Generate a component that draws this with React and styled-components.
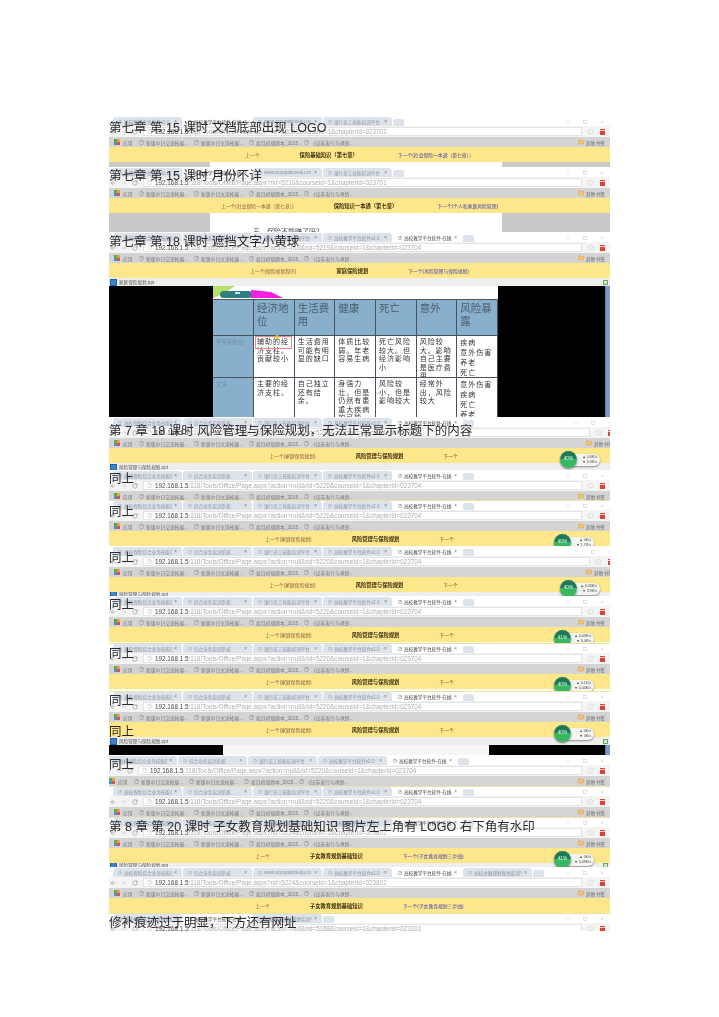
import React from "react";
import styled, { createGlobalStyle } from "styled-components";
import { ArrowLeft, ArrowRight, RotateCw, Star, File, Folder, Minus, Square, X } from "lucide-react";

const Global = createGlobalStyle`
  html, body { margin: 0; padding: 0; background: #fff; }
  body { font-family: "Liberation Sans", "Noto Sans CJK SC", sans-serif; }
`;

const Page = styled.main`
  width: 501px;
  padding: 116px 109px 86px;
  display: flex;
  flex-direction: column;
`;

const Shot = styled.section`
  position: relative;
  height: ${(p) => p.$h}px;
`;

const Frame = styled.div`
  height: 100%;
  overflow: hidden;
  filter: blur(0.55px);
  background: #fff;
`;

const Inner = styled.div`
  width: ${(p) => p.$w}px;
  margin-left: ${(p) => p.$ml}px;
  display: flex;
  flex-direction: column;
`;

const Caption = styled.h2`
  position: absolute;
  left: 0;
  top: ${(p) => p.$top}px;
  z-index: 5;
  margin: 0;
  font-size: 12.5px;
  line-height: 14px;
  font-weight: 400;
  color: #2a2a2a;
  white-space: pre;
  filter: blur(0.3px);
`;

const TabRow = styled.div`
  height: 10px;
  display: flex;
  align-items: flex-end;
  padding-left: 4px;
  gap: 1px;
  background: #fff;
  border-top: 1px solid ${(p) => (p.$line ? "#ebe2a8" : "transparent")};
  box-sizing: border-box;
`;

const Tab = styled.div`
  width: 69px;
  height: 9px;
  flex: none;
  display: flex;
  align-items: center;
  gap: 2px;
  padding: 0 5px;
  box-sizing: border-box;
  border-radius: 3px 3px 0 0;
  background: ${(p) => (p.$active ? "#fff" : "#dde3ea")};
  font-size: 4.6px;
  color: ${(p) => (p.$active ? "#444" : "#8a93a0")};
  white-space: nowrap;
  overflow: hidden;
  span { flex: 1; overflow: hidden; }
  b { font-weight: 400; color: #777; }
`;

const NewTab = styled.div`
  width: 11px;
  height: 7px;
  flex: none;
  background: #dde3ea;
  border-radius: 2px 2px 0 0;
`;

const WindowButtons = styled.div`
  margin-left: auto;
  height: 100%;
  display: flex;
  align-items: center;
  gap: 13px;
  padding-right: 6px;
  color: #aaa;
`;

const AddressRow = styled.div`
  height: 11px;
  display: flex;
  align-items: center;
  gap: 5px;
  padding: 0 4px 0 1px;
  background: #f4f4f4;
  color: #666;
`;

const UrlBox = styled.div`
  flex: 1;
  height: 9px;
  display: flex;
  align-items: center;
  gap: 3px;
  padding-left: 3px;
  background: #fff;
  border: 1px solid #e4e4e4;
  box-sizing: border-box;
  font-size: 6.35px;
  color: #aeaeae;
  white-space: nowrap;
  overflow: hidden;
  strong { font-weight: 400; color: #444; }
`;

const MenuIcon = styled.div`
  width: 5px;
  height: 6px;
  flex: none;
  margin: 0 1px;
  background: repeating-linear-gradient(#e0403a 0 1.4px, #f8d0d0 1.4px 2.2px);
`;

const BookmarkRow = styled.div`
  height: 10px;
  display: flex;
  align-items: center;
  padding: 0 3px;
  background: #d4d4d4;
  font-size: 4.8px;
  color: #666;
  white-space: nowrap;
`;

const AppsIcon = styled.div`
  width: 6px;
  height: 6px;
  margin: 0 3px 0 2px;
  background: conic-gradient(#e8a33a 25%, #d9534f 25% 50%, #4a90d9 50% 75%, #4caf50 75%);
`;

const Bookmark = styled.div`
  width: ${(p) => p.$w}px;
  display: flex;
  align-items: center;
  gap: 2px;
  color: #777;
  svg { flex: none; }
`;

const OtherBooks = styled.div`
  margin-left: auto;
  display: flex;
  align-items: center;
  gap: 2px;
  padding-right: 2px;
  svg { fill: #f2c66e; stroke: #d89c3c; }
`;

const CourseBar = styled.nav`
  position: relative;
  height: ${(p) => p.$h}px;
  flex: none;
  display: flex;
  justify-content: center;
  align-items: center;
  gap: 40px;
  background: #fee68a;
  font-size: 4.8px;
  white-space: nowrap;
`;

const PrevLink = styled.span`
  color: #8a5c4a;
`;

const CourseTitle = styled.strong`
  color: #3a2c10;
  font-weight: 700;
  font-size: 5.3px;
`;

const NextLink = styled.span`
  color: ${(p) => (p.$none ? "#6a5a30" : "#4444b4")};
`;

const Speed = styled.div`
  position: absolute;
  right: ${(p) => p.$right}px;
  top: 3px;
  z-index: 2;
  width: 39px;
  height: 12px;
  margin-top: 3px;
  display: flex;
  flex-direction: column;
  justify-content: center;
  align-items: flex-end;
  padding-right: 3px;
  box-sizing: border-box;
  border-radius: 6px;
  background: #f4f4f0;
  box-shadow: 0 1px 2px #888;
  font-size: 3.6px;
  line-height: 4.6px;
  color: #444;
`;

const SpeedDial = styled.div`
  position: absolute;
  left: -1px;
  top: -3px;
  width: 17px;
  height: 17px;
  border-radius: 50%;
  background: linear-gradient(#1d7a58 0 45%, #37b75f 45%);
  box-shadow: 0 1px 2px #6a6a6a;
  display: flex;
  align-items: center;
  justify-content: center;
  color: #e8fff0;
  font-size: 4.8px;
`;

const FileBar = styled.div`
  height: ${(p) => p.$h}px;
  flex: none;
  display: flex;
  align-items: center;
  gap: 2px;
  padding: 0 2px 0 1px;
  background: #eeeeee;
  font-size: 4.6px;
  color: #555;
  white-space: nowrap;
  overflow: hidden;
`;

const PptIcon = styled.i`
  width: 5px;
  height: 5px;
  flex: none;
  background: #3f83cf;
  border: 0.5px solid #1f5fa8;
`;

const ResizeIcon = styled.i`
  width: 5px;
  height: 5px;
  flex: none;
  margin-left: auto;
  border: 1px solid #6aa56a;
  background: #cfe8cf;
  box-sizing: border-box;
`;

const Backdrop = styled.div`
  height: ${(p) => p.$h}px;
  flex: none;
  display: grid;
  grid-template-columns: ${(p) => p.$cols};
  overflow: hidden;
  background: ${(p) => p.$side};
`;

const Sheet = styled.div`
  position: relative;
  background: ${(p) => p.$bg};
  font-size: 7px;
  color: #444;
`;

const SheetLine = styled.p`
  margin: 0;
  padding: 13px 0 0 43px;
  white-space: nowrap;
`;

const Scroll = styled.div`
  background: #7b9bc9;
  border-left: 1px solid #5b7eb0;
`;

const SlideHeader = styled.div`
  height: 13px;
  background: #fff;
  border-bottom: 1px solid #555;
  svg { display: block; }
`;

const SlideTable = styled.div`
  display: grid;
  grid-template-columns: 41px repeat(6, 1fr);
  grid-template-rows: 36px 42px 40px;
  background: #fff;
  position: relative;
`;

const HeadCell = styled.div`
  background: #88afcc;
  border-right: 1px solid #47525c;
  border-bottom: 1px solid #47525c;
  padding: 2px 3px;
  font-size: 10.5px;
  line-height: 13px;
  color: #4b5c6a;
`;

const RowHead = styled.div`
  background: #88afcc;
  border-right: 1px solid #47525c;
  border-bottom: 1px solid #47525c;
  padding: 3px;
  font-size: 5.6px;
  line-height: 7.5px;
  color: #6f8ea6;
`;

const BodyCell = styled.div`
  background: #fff;
  border-right: 1px solid #47525c;
  border-bottom: 1px solid #47525c;
  padding: 2px 3px;
  font-size: 7px;
  line-height: ${(p) => (p.$loose ? 10 : 8.6)}px;
  letter-spacing: 1px;
  color: #333;
  overflow: hidden;
`;

const Marker = styled.div`
  position: absolute;
  left: 42px;
  top: 36px;
  width: 37px;
  height: 13px;
  border: 1px solid #e88a8a;
  box-sizing: border-box;
  &::after {
    content: "";
    position: absolute;
    left: 19px;
    top: -2px;
    width: 4px;
    height: 4px;
    border-radius: 50%;
    background: #e8c83a;
  }
`;

const StarMark = styled(Star)`
  flex: none;
  color: #aaa;
`;

const ic = { strokeWidth: 1.6 };

const hostUrl = (tail) => (
  <>
    <strong>192.168.1.5</strong>
    {":118/Tools/Office/Page.aspx?" + tail}
  </>
);

const SETS = {
  a: ["高校教学平台软件v2.0", "*高校教学平台软件-在线打", "www.occupationedu.cn", "银行员工技能培训平台"],
  b: ["高校保险综合业务技能部", "综合业务实训系统", "银行员工技能培训平台", "高校教学平台软件v2.0", "*高校教学平台软件-在线打"],
  c: ["高校保险综合业务技能部", "综合业务实训系统", "www.occupationedu.cn", "高校教学平台软件v2.0", "*高校教学平台软件-在线打", "高校金融理财规划实训平台"],
  d: ["高校保险综合业务技能部", "*高校教学平台软件-在线打", "高校金融理财规划实训平台"],
};

const Risk = { prev: "上一个(家庭保险规划)", title: "风险管理与保险规划", next: "下一个", none: true };
const Child = { prev: "上一个", title: "子女教育规划基础知识", next: "下一个(子女教育规划三步曲)" };

const SHOTS = [
  {
    h: 51, tabs: "a", tail: "rid=5208&courseId=1&chapterId=023701",
    caps: [{ t: 5, s: "第七章 第 15 课时 文档底部出现 LOGO" }],
    bar: { prev: "上一个", title: "保险基础知识（第七章）", next: "下一个(社会保险一本通（第七章））" },
    stub: { h: 5, line: "" },
  },
  {
    h: 65, tabs: "a", tail: "rid=5210&courseId=1&chapterId=023701",
    caps: [{ t: 2, s: "第七章 第 15 课时 月份不详" }],
    bar: { prev: "上一个(社会保险一本通（第七章）)", title: "保险知识一本通（第七章）", next: "下一个(个人和家庭风险管理)" },
    stub: { h: 19, line: "五、保险不能赚了吗？" },
  },
  {
    h: 185, tabs: "b", tail: "action=null&rid=5219&courseId=1&chapterId=023704",
    caps: [{ t: 3, s: "第七章 第 18 课时 遮挡文字小黄球" }],
    bar: { prev: "上一个(保险规划程序)", title: "家庭保险规划", next: "下一个(风险管理与保险规划)" },
    file: { h: 8, name: "家庭保险规划.ppt" }, slide: true,
  },
  {
    h: 53, tabs: "b", w: 509, tail: "action=null&rid=5220&courseId=1&chapterId=023704",
    caps: [{ t: 7, s: "第 7 章 18 课时 风险管理与保险规划，无法正常显示标题下的内容" }],
    bar: Risk, speed: ["0.6K/s", "0.0K/s"], dialText: "40%", file: { h: 8, name: "风险管理与保险规划.ppt" },
  },
  { h: 30, tabs: "b", tail: "action=null&rid=5220&courseId=1&chapterId=023704", caps: [{ t: 2, s: "同上" }] },
  {
    h: 46, tabs: "b", line: true, tail: "action=null&rid=5220&courseId=1&chapterId=023704",
    caps: [{ t: 5, s: "同上" }], bar: Risk, speed: ["0K/s", "1.7K/s"], dialText: "40%",
  },
  {
    h: 50, tabs: "b", w: 509, tail: "action=null&rid=5220&courseId=1&chapterId=023704",
    caps: [{ t: 5, s: "同上" }], bar: Risk, speed: ["0.03K/s", "3.9K/s"], dialText: "40%", file: { h: 4, name: "风险管理与保险规划.ppt" },
  },
  {
    h: 47, tabs: "b", tail: "action=null&rid=5220&courseId=1&chapterId=023704",
    caps: [{ t: 2, s: "同上" }], bar: Risk, speed: ["0.03K/s", "0.4K/s"], dialText: "41%",
  },
  {
    h: 48, tabs: "b", line: true, tail: "action=null&rid=5220&courseId=1&chapterId=023704",
    caps: [{ t: 4, s: "同上" }], bar: Risk, speed: ["0.1K/s", "0.04K/s"], dialText: "40%",
  },
  {
    h: 64, tabs: "b", line: true, tail: "action=null&rid=5220&courseId=1&chapterId=023704",
    caps: [{ t: 3, s: "同上" }, { t: 34, s: "同上" }], bar: Risk, speed: ["0K/s", "0K/s"], dialText: "40%",
    file: { h: 8, name: "风险管理与保险规划.ppt" }, band: true,
  },
  { h: 31, tabs: "b", ml: -5, w: 506, tail: "action=null&rid=5220&courseId=1&chapterId=023704", caps: [{ t: 3, s: "同上" }] },
  { h: 31, tabs: "b", line: true, tail: "action=null&rid=5220&courseId=1&chapterId=023704", caps: [] },
  {
    h: 50, tabs: "b", line: true, tail: "rid=5224&courseId=1&chapterId=023802",
    caps: [{ t: 3, s: "第 8 章 第 20 课时 子女教育规划基础知识 图片左上角有 LOGO 右下角有水印" }],
    bar: Child, speed: ["0K/s", "0.09K/s"], dialText: "41%", file: { h: 4, name: "风险管理与保险规划.ppt" },
  },
  { h: 46, tabs: "c", tail: "rid=5224&courseId=1&chapterId=023802", caps: [], bar: Child },
  {
    h: 18, tabs: "d", line: true, tail: "action=null&rid=5168&courseId=1&chapterId=023201",
    caps: [{ t: 3, s: "修补痕迹过于明显，下方还有网址" }],
  },
];

const RISKS = [
  ["经济地位", "生活费用", "健康", "死亡", "意外", "风险暴露"],
  ["爷爷和奶奶", "辅助的经济支柱。贡献较小", "生活费用可能有明显的缺口", "体质比较弱。年老容易生病", "死亡风险较大。但经济影响小", "风险较大。影响自己主要是医疗费用", "疾病\n意外伤害\n养老\n死亡"],
  ["丈夫", "主要的经济支柱。", "自己独立还有结余。", "身强力壮，但是仍然有患重大疾病的可能", "风险较小，但是影响较大", "经常外出，风险较大", "意外伤害\n疾病\n死亡\n养老"],
];

function Slide() {
  return (
    <Backdrop $h={131} $side="#000" $cols="104px 285px 107px 5px">
      <div />
      <Sheet $bg="#fff">
        <SlideHeader>
          <svg width="285" height="12" viewBox="0 0 285 12">
            <path d="M0 0h22L10 8 0 12z" fill="#b7e06a" />
            <rect x="7" y="5" width="32" height="7" rx="3.5" fill="#2f7f80" />
            <rect x="22" y="6" width="5" height="2" fill="#bfeee8" />
            <path d="M38 4l20 2 12 6H38z" fill="#f21fe0" />
          </svg>
        </SlideHeader>
        <SlideTable>
          <HeadCell />
          {RISKS[0].map((t) => (
            <HeadCell key={t}>{t}</HeadCell>
          ))}
          {RISKS.slice(1).map((row) =>
            row.map((c, i) =>
              i === 0 ? (
                <RowHead key={c}>{c}</RowHead>
              ) : (
                <BodyCell key={c} $loose={i === 6}>
                  {c.split("\n").map((l) => (
                    <div key={l}>{l}</div>
                  ))}
                </BodyCell>
              )
            )
          )}
          <Marker />
        </SlideTable>
      </Sheet>
      <div />
      <Scroll />
    </Backdrop>
  );
}

function Browser({ shot }) {
  const { tabs, tail, bar, speed, dialText, file, stub, slide, band, line, w = 501, ml = 0 } = shot;
  return (
    <Inner $w={w} $ml={ml}>
      <TabRow $line={line}>
        {SETS[tabs].map((t, i) => {
          const active = t.startsWith("*");
          return (
            <Tab key={i} $active={active}>
              <File size={4} />
              <span>{active ? t.slice(1) : t}</span>
              <b>×</b>
            </Tab>
          );
        })}
        <NewTab />
        <WindowButtons>
          <Minus size={4} />
          <Square size={4} />
          <X size={4} />
        </WindowButtons>
      </TabRow>
      <AddressRow>
        <ArrowLeft size={6} {...ic} />
        <ArrowRight size={6} {...ic} color="#bbb" />
        <RotateCw size={6} {...ic} />
        <UrlBox>
          <File size={5} />
          <span>{hostUrl(tail)}</span>
        </UrlBox>
        <StarMark size={7} strokeWidth={1} />
        <MenuIcon />
      </AddressRow>
      <BookmarkRow>
        <AppsIcon />
        <Bookmark $w={16}>应用</Bookmark>
        <Bookmark $w={55}><File size={5} />新版中日交流拓展...</Bookmark>
        <Bookmark $w={55}><File size={5} />新版中日文流拓展...</Bookmark>
        <Bookmark $w={55}><File size={5} />投目初级题本_2015...</Bookmark>
        <Bookmark $w={55}><File size={5} />《证券发行与承销...</Bookmark>
        <OtherBooks><Folder size={6} />其他书签</OtherBooks>
      </BookmarkRow>
      {bar && (
        <CourseBar $h={15}>
          <PrevLink>{bar.prev}</PrevLink>
          <CourseTitle>{bar.title}</CourseTitle>
          <NextLink $none={bar.none}>{bar.next}</NextLink>
          {speed && (
            <Speed $right={16 + (w - 501) / 4}>
              <SpeedDial>{dialText}</SpeedDial>
              <div>▲ {speed[0]}</div>
              <div>▼ {speed[1]}</div>
            </Speed>
          )}
        </CourseBar>
      )}
      {file && (
        <FileBar $h={file.h}>
          <PptIcon />
          {file.name}
          <ResizeIcon />
        </FileBar>
      )}
      {stub && (
        <Backdrop $h={stub.h} $side="#c9c9c9" $cols="101px 292px 108px">
          <div />
          <Sheet $bg="#fff">
            <SheetLine>{stub.line}</SheetLine>
          </Sheet>
          <div />
        </Backdrop>
      )}
      {slide && <Slide />}
      {band && (
        <Backdrop $h={10} $side="#000" $cols="114px 266px 116px 5px">
          <div />
          <Sheet $bg="#f6f6f6" />
          <div />
          <Scroll />
        </Backdrop>
      )}
    </Inner>
  );
}

export default function App() {
  return (
    <>
      <Global />
      <Page>
        {SHOTS.map((s, i) => (
          <Shot key={i} $h={s.h}>
            <Frame>
              <Browser shot={s} />
            </Frame>
            {s.caps.map((c) => (
              <Caption key={c.t} $top={c.t}>{c.s}</Caption>
            ))}
          </Shot>
        ))}
      </Page>
    </>
  );
}
